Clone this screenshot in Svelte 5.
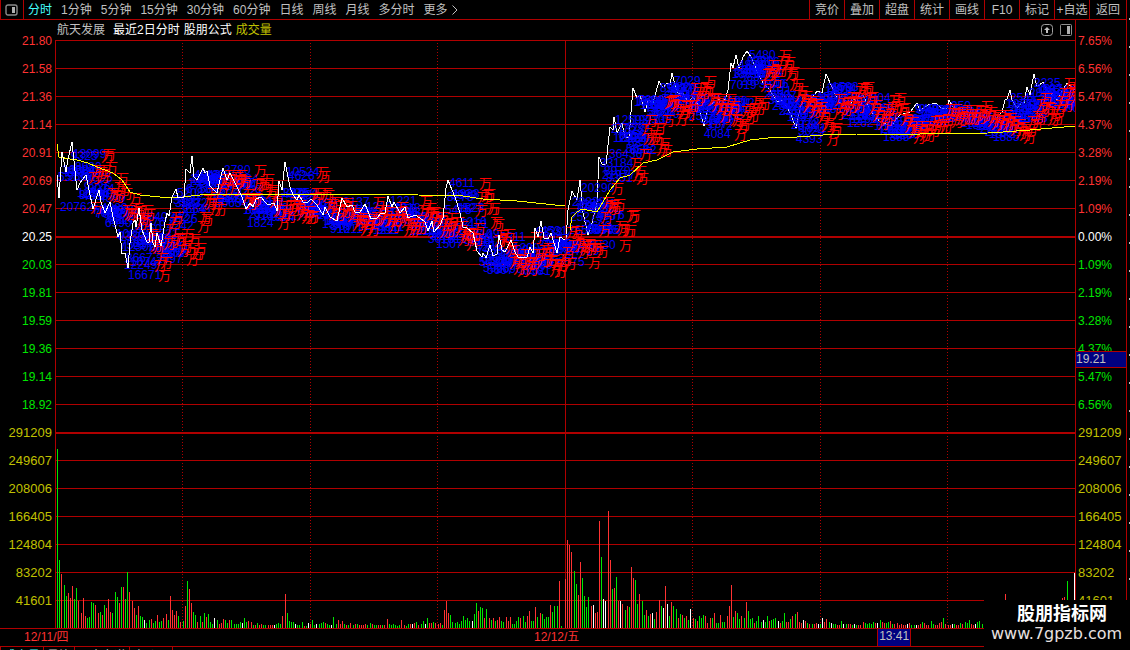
<script>
  const periods = ["分时", "1分钟", "5分钟", "15分钟", "30分钟", "60分钟", "日线", "周线", "月线", "多分时"];
  const tools = ["竞价", "叠加", "超盘", "统计", "画线", "F10", "标记", "+自选", "返回"];
  const tabs = ["成交量", "量比", "买卖力道", "竞价图"];
  let activePeriod = "分时";
  let activeTab = "成交量";

  const prices = ["21.80", "21.58", "21.36", "21.14", "20.91", "20.69", "20.47", "20.25", "20.03", "19.81", "19.59", "19.36", "19.14", "18.92"];
  const percents = ["7.65%", "6.56%", "5.47%", "4.37%", "3.28%", "2.19%", "1.09%", "0.00%", "1.09%", "2.19%", "3.28%", "4.37%", "5.47%", "6.56%"];
  const volumes = ["291209", "249607", "208006", "166405", "124804", "83202", "41601"];
  const tone = (i) => (i < 7 ? "up" : i === 7 ? "flat" : "down");

  // plot area: 480 minutes over 1020 units, 21 rows of 28px
  const plotWidth = 1020;
  const rowHeight = 28;
  const base = 588;
  const rows = Array.from({ length: 21 }, (_, i) => i);
  const pct = (x) => `${(x / plotWidth) * 100}%`;

  const dayOne =
    "2,135 4,158 7,112 11,132 13,119 17,102 22,150 25,143 31,135 34,150 38,169 44,150 46,162 50,173 55,162 58,177 63,197 65,192 67,214 70,213 73,228 75,203 78,183 80,180 81,187 84,168 87,190 92,202 94,202 96,183 98,203 100,207 102,193 106,206 110,182 112,173 114,176 117,157 121,149 123,158 129,157 131,129 135,133 137,116 139,137 142,140 148,128 150,133 152,131 155,146 162,153 165,140 168,128 172,140 175,133 180,143 187,157 191,169 195,163 198,167 201,159 206,157 210,162 213,165 219,163 222,171 224,141 227,150 230,122 235,147 238,155 242,160 244,155 248,162 252,163 256,159 262,165 268,175 270,167 275,177 282,181 287,158 292,167 297,165 300,172 305,172 310,164 316,179 322,178 326,173 330,173 333,156 337,167 339,162 345,173 350,167 353,178 360,175 365,178 370,182 373,191 377,181 379,192 385,185 388,178 391,148 393,140 397,150 400,157 405,173 408,187 412,188 418,193 422,211 427,217 428,213 431,218 435,205 438,216 442,214 444,195 447,210 450,212 456,200 460,212 463,217 472,217 475,207 478,213 480,188 483,197 486,181 489,198 493,199 496,193 502,213 505,197 510,200";
  const dayTwo =
    "511,200 513,170 517,151 522,160 525,140 528,173 533,195 537,183 542,163 544,117 547,124 551,124 555,87 558,90 559,77 562,93 567,83 570,97 574,97 578,48 582,58 585,55 590,72 593,60 598,63 604,41 608,48 612,43 615,45 617,33 620,45 623,53 628,53 633,62 638,57 643,65 649,86 653,67 658,63 666,58 670,60 673,50 676,23 678,28 681,15 684,28 688,17 692,11 696,17 703,33 708,43 715,50 722,62 727,60 732,67 737,77 741,89 743,78 748,57 752,60 757,58 762,51 767,53 771,34 777,47 783,60 792,72 798,60 808,55 815,70 825,82 836,86 845,75 855,72 862,63 865,71 873,65 881,63 886,68 892,68 894,60 898,67 912,72 925,78 937,83 947,72 950,60 952,59 955,50 957,60 962,68 967,62 969,63 972,47 975,55 979,34 982,47 988,42 992,50 1002,60 1012,43 1020,50";
  const averageOne =
    "2,104 4,117 15,119 22,120 33,123 42,127 58,133 67,140 75,152 85,155 105,157 128,157 145,155 175,154 195,154 283,154 363,155 408,156 428,159 462,161 510,166";
  const averageTwo =
    "515,190 517,177 522,172 527,169 542,172 545,167 555,150 565,138 575,135 588,123 602,120 618,112 642,109 672,107 695,100 722,97 742,97 768,95 802,94 865,94 933,93 948,92 975,90 1020,86";

  // one entry a minute: r rise, g fall, w unchanged, then bar height
  const minutes = (
    "g179 g68 r54 g43 g32 r35 r30 r42 g29 g40 r27 r15 r30 r12 g10 g11 g26 g25 r23 r15 g16 r13 g23 r20 r29 r16 g15 g36 g31 r25 g41 r41 g29 g56 r36 r27 r20 g13 r22 g12 " +
    "g11 w8 g5 g8 r9 g5 g7 r13 g6 g7 r10 r14 g8 r32 r18 r13 r17 g12 r6 g7 r22 g47 r39 r25 g16 g13 r6 g12 r6 g15 r11 g14 g6 g4 w10 g8 r4 r5 r9 g8 " +
    "g5 r8 g8 g4 g4 g4 g6 w5 g10 g6 r7 r6 g3 r3 g5 r3 r4 g3 g3 r3 r3 r3 w3 g4 g5 g4 r12 r34 g15 g7 g6 g6 w4 g3 g3 g6 r2 g2 w5 r4 " +
    "g8 g3 w4 g4 g5 g6 r5 g4 g3 w3 g11 g4 r8 r4 r7 g4 r3 g3 r5 g3 r4 g4 r3 r3 r3 r4 g3 g5 r4 g3 g3 r3 r3 g3 r3 r9 g4 g3 g4 g3 " +
    "g2 g3 r8 r3 g2 g4 r4 w4 r5 g6 r3 g4 g7 w4 g10 r5 r5 g6 r5 r4 r5 g3 r18 r27 r15 g13 g6 g5 g6 g4 g7 g12 g8 g10 g7 w7 g14 g25 r17 g21 " +
    "g20 r10 g19 r10 g8 r10 g7 r8 r11 g7 g6 r11 r7 r11 g4 g4 g7 g11 r10 g12 g6 r12 r17 g7 g7 r21 g11 r15 g14 g9 g11 g11 r23 g16 g22 g22 r47 g2 g0 r49 " +
    "r88 r83 r76 g57 g44 r33 r66 g50 g32 g21 g31 r22 w23 r15 r16 r107 g71 w29 w27 r117 r68 g39 r40 g51 r27 w27 r24 g18 r22 g21 r61 r50 g48 g24 r34 g27 g13 r18 g12 r14 " +
    "w15 g9 r16 r28 g22 w20 r42 w24 g12 r26 g22 g19 r10 g14 r13 g10 r12 g8 w19 r10 g9 r7 g12 g10 g13 r12 r5 r10 g10 r15 g5 g5 r13 g6 g6 r12 r22 r43 g11 r17 " +
    "g15 g9 r12 g10 r26 g17 g9 g10 r5 g7 g12 g6 w8 g6 g12 r7 g8 g9 g10 w7 r5 g7 g15 r6 r6 g9 r12 g14 r16 r6 r5 w8 r7 g5 r4 g4 r4 r5 w4 g4 " +
    "w10 r6 r9 g6 w5 g4 g4 r3 r3 g7 w4 g4 r4 r4 g3 w4 g3 r3 r3 r6 g5 g4 g5 g4 g6 r5 w5 g8 r6 r5 g5 g6 r7 g4 r4 r5 r3 r4 r3 r3 " +
    "w4 r5 g3 g3 w3 r3 r4 g6 r5 r3 r3 g7 g4 r3 r3 r5 r6 g10 r4 r3 r3 w4 g4 r3 r3 g5 r4 g6 g5 g8 r4 r3 w4 g6 g7 g4 r8 r6 g5 g7 " +
    "r6 g8 r5 g9 r7 g6 r34 r12 g8 r6 g7 g9 r8 g6 g5 r7 g8 r9 g6 r7 g5 r6 g8 r12 g9 r8 g11 r14 g12 r15 g10 r12 g14 r30 r31 g47 g22 r20"
  ).split(" ");

  const parse = (line) => line.split(" ").map((p) => p.split(",").map(Number));
  const track = [...parse(dayOne), ...parse(dayTwo)];

  const priceY = (x) => {
    const next = track.findIndex((p) => p[0] >= x);
    if (next < 1) return track[0][1];
    const [x0, y0] = track[next - 1];
    const [x1, y1] = track[next];
    return Math.round(y0 + ((y1 - y0) * (x - x0)) / (x1 - x0));
  };

  const bars = minutes.map((m, i) => {
    const x = Math.floor(2.7 + i * 2.125);
    const height = Number(m.slice(1));
    const y = priceY(x);
    const price = 20.25 + ((196 - y) / rowHeight) * 0.221;
    // turnover in units of 10,000
    const amount = Math.round(height * 14.8575 * price);
    const labelY = y + 11 + ((i * 7) % 13) - 5;
    return { x, labelY, height, kind: m[0], amount };
  });
  const traded = bars.filter((bar) => bar.height > 0);
</script>

<div class="page">
  <main class="panel">
    <header class="toolbar">
      <button class="layout" aria-label="布局">
        <svg width="13" height="12" viewBox="0 0 13 12">
          <rect x="1" y="1" width="11" height="10" rx="2" fill="none" stroke="#8a8a8a" stroke-width="1.4" />
          <rect x="7" y="3" width="3" height="6" fill="#b0b0b0" />
        </svg>
      </button>
      <nav class="periods">
        {#each periods as period}
          <button class:active={period === activePeriod} on:click={() => (activePeriod = period)}>{period}</button>
        {/each}
        <button class="more">更多<svg width="6" height="10" viewBox="0 0 6 10"><path d="M0.5 0.5L5 5L0.5 9.5" fill="none" stroke="#c0c0c0" /></svg></button>
      </nav>
      <div class="tools">
        {#each tools as tool}
          <button>{tool}</button>
        {/each}
      </div>
    </header>

    <section class="body">
      <div class="axis left">
        {#each prices as price, i}
          <span class={tone(i)}>{price}</span>
        {/each}
        {#each volumes as volume}
          <span class="volume">{volume}</span>
        {/each}
      </div>

      <div class="chart">
        <div class="info">
          <span class="name">航天发展</span>
          <span>最近2日分时</span>
          <span>股朋公式</span>
          <span class="volume">成交量</span>
          <div class="actions">
            <button aria-label="展开">
              <svg width="12" height="12" viewBox="0 0 12 12">
                <rect x="0.5" y="0.5" width="11" height="11" rx="3" fill="none" stroke="#a0a0a0" />
                <path d="M6 3L9 6H7V9H5V6H3Z" fill="#c0c0c0" />
              </svg>
            </button>
            <button aria-label="侧栏">
              <svg width="12" height="12" viewBox="0 0 12 12">
                <rect x="0.5" y="0.5" width="11" height="11" rx="1" fill="none" stroke="#909090" />
                <rect x="7" y="2" width="3" height="8" fill="#b0b0b0" />
              </svg>
            </button>
          </div>
        </div>

        <svg class="plot" width="100%" height={base}>
          <g class="grid">
            {#each rows as row}
              <rect x="0" y={row * rowHeight} width="100%" height={row === 7 || row === 14 ? 2 : 1} />
            {/each}
            <rect x="0" y="0" width="1" height={base} />
            <rect x="50%" y="0" width="1" height={base} />
          </g>
          {#each [127, 255, 382, 637, 765, 892] as x}
            <line class="dots" x1={pct(x + 0.5)} x2={pct(x + 0.5)} y1="3" y2={base} />
          {/each}

          {#each bars as bar}
            <rect class={bar.kind} x={pct(bar.x)} y={base - bar.height} width="1" height={bar.height} />
          {/each}
          <rect class="w" x={pct(1019)} y="533" width="1" height="55" />

          <svg width="100%" height={base} viewBox="0 0 {plotWidth} {base}" preserveAspectRatio="none">
            <polyline class="price" points={dayTwo} />
          </svg>

          {#each traded as bar}
            <text class="amount" x={pct(bar.x + 1)} y={bar.labelY}>{bar.amount}</text>
          {/each}
          {#each traded as bar}
            <text class="unit" x={pct(bar.x + 31)} y={bar.labelY + 1}>万</text>
          {/each}

          <svg width="100%" height={base} viewBox="0 0 {plotWidth} {base}" preserveAspectRatio="none">
            <polyline class="average" points={averageOne} />
            <polyline class="average" points={averageTwo} />
            <polyline class="price" points={dayOne} />
          </svg>
        </svg>
      </div>

      <div class="axis right">
        {#each percents as percent, i}
          <span class={tone(i)}>{percent}</span>
        {/each}
        {#each volumes as volume}
          <span class="volume">{volume}</span>
        {/each}
        <div class="cursor-price">19.21</div>
      </div>
    </section>

    <section class="times">
      <span>12/11/四</span>
      <span>12/12/五</span>
      <div class="cursor-time">13:41</div>
    </section>

    <nav class="tabs">
      {#each tabs as tab}
        <button class:active={tab === activeTab} on:click={() => (activeTab = tab)}>{tab}</button>
      {/each}
    </nav>
  </main>

  <aside class="strip"></aside>

  <div class="watermark">
    <strong>股朋指标网</strong>
    <span>www.7gpzb.com</span>
  </div>
</div>

<style>
  :global(body) {
    background: #000;
  }
  .page {
    position: relative;
    display: flex;
    height: 100vh;
    overflow: hidden;
    background: #000;
    color: #c0c0c0;
    font-family: "Liberation Sans", "Noto Sans CJK SC", sans-serif;
    font-size: 12px;
  }
  button {
    margin: 0;
    padding: 0;
    border: 0;
    background: none;
    color: inherit;
    font: inherit;
    line-height: 18px;
    white-space: nowrap;
    cursor: pointer;
  }
  .panel {
    flex: 1;
    min-width: 0;
    border-right: 1px solid #b00000;
  }
  .strip {
    width: 3px;
    background: repeating-linear-gradient(#000 0 18px, #c0c0c0 18px 20px, #000 20px 28px) right / 1px 100% no-repeat;
  }
  .toolbar {
    display: flex;
    height: 19px;
    border-bottom: 1px solid #b00000;
  }
  .layout {
    display: flex;
    align-items: center;
    padding: 0 5px 0 4px;
    border: solid #b00000;
    border-width: 0 1px;
  }
  .periods {
    display: flex;
    flex: 1;
    gap: 9px;
    padding-left: 4px;
  }
  .active {
    color: #4ff;
  }
  .more {
    display: flex;
    align-items: center;
    gap: 4px;
  }
  .tools {
    display: flex;
  }
  .tools button {
    width: 35px;
    border-left: 1px solid #b00000;
  }
  .tools button:last-child {
    width: 37px;
  }
  .body {
    display: flex;
  }
  .axis {
    position: relative;
    display: flex;
    flex-direction: column;
    padding-top: 7px;
    line-height: 28px;
  }
  .left {
    width: 52px;
    padding-right: 3px;
    text-align: right;
  }
  .right {
    width: 48px;
    padding-left: 2px;
    border-left: 1px solid #b00000;
  }
  .up {
    color: #ff3232;
  }
  .flat {
    color: #fff;
  }
  .down {
    color: #00e600;
  }
  .volume {
    color: #c0c000;
  }
  .axis .volume {
    font-size: 13px;
  }
  .chart {
    flex: 1;
    min-width: 0;
  }
  .info {
    display: flex;
    gap: 4px;
    height: 20px;
    padding: 0 3px 0 2px;
    color: #fff;
    line-height: 20px;
  }
  .name {
    margin-right: 4px;
    color: #c0c0c0;
  }
  .actions {
    display: flex;
    gap: 7px;
    margin-left: auto;
  }
  .actions button {
    display: flex;
    align-items: center;
  }
  .plot {
    display: block;
    overflow: hidden;
    shape-rendering: crispEdges;
  }
  .grid {
    fill: #b00000;
  }
  .dots {
    stroke: #b00000;
    stroke-dasharray: 1 2;
  }
  .r {
    fill: #ff3232;
  }
  .g {
    fill: #00e600;
  }
  .w {
    fill: #fff;
  }
  polyline {
    fill: none;
    vector-effect: non-scaling-stroke;
  }
  .price {
    stroke: #fff;
  }
  .average {
    stroke: #ff0;
  }
  .amount {
    fill: #00f;
  }
  .unit {
    fill: #f00;
    font-size: 13px;
  }
  .cursor-price,
  .cursor-time {
    position: absolute;
    box-sizing: border-box;
    border: 1px solid #b00000;
    background: #000080;
    color: #c0c0c0;
    line-height: 15px;
  }
  .cursor-price {
    top: 331px;
    right: 0;
    left: -1px;
    border-right: 0;
    height: 17px;
  }
  .times {
    position: relative;
    display: grid;
    grid-template-columns: 1fr 1fr;
    height: 17px;
    padding: 0 82px 0 24px;
    border: solid #b00000;
    border-width: 1px 0;
    color: #ff3232;
    line-height: 17px;
  }
  .cursor-time {
    top: -1px;
    bottom: -1px;
    left: 77.9%;
    padding: 0 1px;
  }
  .tabs {
    display: flex;
    border-left: 1px solid #b00000;
  }
  .tabs button {
    padding: 0 3px;
    border-right: 1px solid #b00000;
    line-height: 18px;
  }
  .watermark {
    position: absolute;
    right: 0;
    bottom: 0;
    display: flex;
    flex-direction: column;
    box-sizing: border-box;
    width: 146px;
    height: 50px;
    padding: 4px 0 0 7px;
    background: #000;
    color: #fff;
    line-height: 20px;
  }
  .watermark strong {
    padding-left: 26px;
    font-size: 18px;
  }
  .watermark span {
    color: #e8e0e0;
    font-family: "DejaVu Sans", sans-serif;
    font-size: 16px;
  }
</style>
